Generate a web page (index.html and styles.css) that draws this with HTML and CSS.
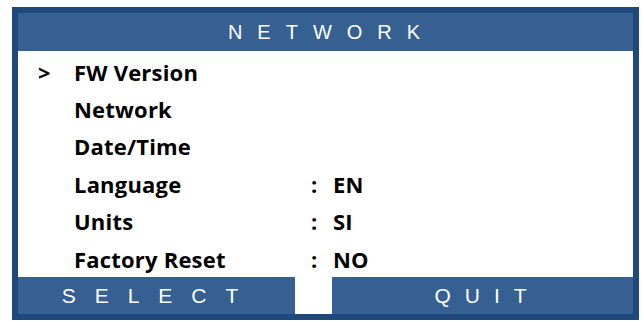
FILE: index.html
```html
<!DOCTYPE html>
<html lang="en">
<head>
  <meta charset="UTF-8" />
  <title>Network</title>
  <link rel="stylesheet" href="styles.css">
</head>
<body>
  <div class="screen">
    <div class="title">NETWORK</div>

    <div class="menu">
      <div class="row">
        <span class="cursor">&gt;</span>
        <span class="label">FW Version</span>
      </div>
      <div class="row">
        <span class="cursor"></span>
        <span class="label">Network</span>
      </div>
      <div class="row">
        <span class="cursor"></span>
        <span class="label">Date/Time</span>
      </div>
      <div class="row">
        <span class="cursor"></span>
        <span class="label">Language</span>
        <span class="colon">:</span>
        <span class="value">EN</span>
      </div>
      <div class="row">
        <span class="cursor"></span>
        <span class="label">Units</span>
        <span class="colon">:</span>
        <span class="value">SI</span>
      </div>
      <div class="row">
        <span class="cursor"></span>
        <span class="label">Factory Reset</span>
        <span class="colon">:</span>
        <span class="value">NO</span>
      </div>
    </div>

    <div class="softkeys">
      <div class="key key-select">SELECT</div>
      <div class="key-gap"></div>
      <div class="key key-quit">QUIT</div>
    </div>
  </div>
</body>
</html>
```

FILE: styles.css
```css
body {
  margin: 0;
  background: #ffffff;
  font-family: "Open Sans", "Noto Sans", sans-serif;
}

.screen {
  margin: 7px 0 0 12px;
  width: 627px;
  height: 313px;
  box-sizing: border-box;
  border: 6px solid #1f497d;
  background: #ffffff;
  display: flex;
  flex-direction: column;
}

.title {
  height: 38px;
  background: #366092;
  color: #ffffff;
  font-family: "Liberation Sans", Arial, sans-serif;
  font-size: 20px;
  letter-spacing: 15px;
  text-indent: 12px;
  text-align: center;
  line-height: 38px;
}

.menu {
  flex: 1;
  padding-top: 2px;
  display: flex;
  flex-direction: column;
}

.row {
  height: 37.4px;
  display: flex;
  align-items: center;
  font-size: 22px;
  font-weight: 700;
  letter-spacing: 0.2px;
  color: #000000;
}

.cursor {
  width: 56px;
  padding-left: 20px;
  box-sizing: border-box;
}

.label {
  width: 237px;
}

.colon {
  width: 22px;
}

/* softkey bar at the bottom */
.softkeys {
  height: 37px;
  display: flex;
}

.key {
  background: #366092;
  color: #ffffff;
  font-family: "Liberation Sans", Arial, sans-serif;
  font-size: 21px;
  line-height: 38px;
  text-align: center;
}

.key-select {
  width: 277px;
  letter-spacing: 19px;
  text-indent: 6px;
}

.key-gap {
  width: 37px;
}

.key-quit {
  flex: 1;
  letter-spacing: 14px;
  text-indent: 10px;
}
```
